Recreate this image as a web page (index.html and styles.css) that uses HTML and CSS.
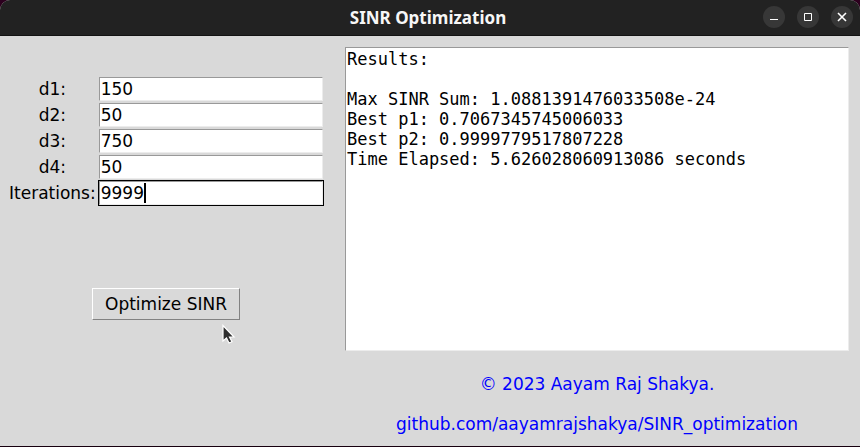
FILE: index.html
```html
<!DOCTYPE html>
<html lang="en">
<head>
<meta charset="utf-8">
<title>SINR Optimization</title>
<link rel="stylesheet" href="styles.css">
</head>
<body>
<div class="window">
  <header class="titlebar">
    <h1 class="title">SINR Optimization</h1>
    <div class="controls">
      <button type="button" class="control" aria-label="Minimize"><svg viewBox="0 0 22 22"><path d="M7 13.500h8"/></svg></button>
      <button type="button" class="control" aria-label="Maximize"><svg viewBox="0 0 22 22"><path d="M7.500 7.500h7v7h-7z"/></svg></button>
      <button type="button" class="control" aria-label="Close"><svg viewBox="0 0 22 22"><path class="cross" d="M7 7l8 8M15 7l-8 8"/></svg></button>
    </div>
  </header>
  <main class="content">
    <form class="panel">
      <div class="fields">
        <label for="d1">d1:</label>
        <div class="entry"><input id="d1" type="text" value="150"></div>
        <label for="d2">d2:</label>
        <div class="entry"><input id="d2" type="text" value="50"></div>
        <label for="d3">d3:</label>
        <div class="entry"><input id="d3" type="text" value="750"></div>
        <label for="d4">d4:</label>
        <div class="entry"><input id="d4" type="text" value="50"></div>
        <label for="iterations">Iterations:</label>
        <div class="entry active"><input id="iterations" type="text" value="9999"><span class="caret"></span></div>
      </div>
      <button type="button" class="run">Optimize SINR</button>
      <svg class="pointer" viewBox="0 0 14 22"><path d="M1 1.500v15.500l3.500-3 2.500 5 3-1.300-2.500-4.700h4.500z" fill="#2e2e2e" stroke="#fff" stroke-width="1.200"/></svg>
    </form>
    <section class="output">
      <textarea class="results" aria-label="Results" readonly>Results:

Max SINR Sum: 1.0881391476033508e-24
Best p1: 0.7067345745006033
Best p2: 0.9999779517807228
Time Elapsed: 5.626028060913086 seconds</textarea>
      <footer class="credits">
        <p>© 2023 Aayam Raj Shakya.</p>
        <p><a href="https://github.com/aayamrajshakya/SINR_optimization">github.com/aayamrajshakya/SINR_optimization</a></p>
      </footer>
    </section>
  </main>
</div>
</body>
</html>
```
FILE: styles.css
```css
* {
  box-sizing: border-box;
}

body {
  margin: 0;
  background: #2c001e;
  color: #000;
  font: 17px/20px "DejaVu Sans", sans-serif;
}

input,
button,
textarea {
  font: inherit;
  color: inherit;
  border-radius: 0;
}

.window {
  display: flex;
  flex-direction: column;
  min-height: 100vh;
  background: #d9d9d9;
  border-bottom: 1px solid #17000f;
  border-radius: 10px 10px 0 0;
  overflow: hidden;
}

.titlebar {
  display: grid;
  grid-template-columns: 1fr auto 1fr;
  align-items: center;
  height: 36px;
  padding: 0 7px 1px 3px;
  background: #222;
  border-bottom: 1px solid #131313;
}

.title {
  grid-column: 2;
  margin: 0;
  color: #f7f7f7;
  font: bold 17px/26px "Noto Sans", sans-serif;
  padding-top: 2px;
}

.controls {
  display: flex;
  justify-content: flex-end;
  gap: 12px;
}

.control {
  width: 22px;
  height: 22px;
  padding: 0;
  border: 0;
  border-radius: 50%;
  background: #373737;
}

.control svg {
  display: block;
  width: 22px;
  height: 22px;
  fill: none;
  stroke: #fff;
}

.cross {
  stroke-width: 1.600;
}

.content {
  flex: 1;
  display: grid;
  grid-template-columns: 2fr 3fr;
  padding: 11px 11px 2px 9px;
}

.panel {
  position: relative;
  padding-top: 29px;
  padding-right: 22px;
}

.fields {
  display: grid;
  grid-template-columns: auto 1fr;
  grid-auto-rows: 26px;
  column-gap: 2px;
  align-items: center;
  margin-right: -1px;
  text-align: center;
}

.entry {
  position: relative;
  height: 26px;
  padding: 1px;
}

.entry input {
  display: block;
  width: 100%;
  height: 24px;
  padding: 0 1px;
  border: 1px solid;
  border-color: #999 #ececec #ececec #999;
  background: #fff;
  outline: 0;
}

.entry.active {
  padding: 0;
  border: 1px solid #000;
}

.caret {
  position: absolute;
  top: 2px;
  left: 45px;
  width: 2px;
  height: 20px;
  background: #000;
}

.run {
  display: block;
  height: 32px;
  margin: 82px auto 0;
  padding: 0 12px;
  border: 1px solid;
  border-color: #fff #828282 #828282 #fff;
  background: #d9d9d9;
}

.pointer {
  position: absolute;
  top: 277px;
  left: 213px;
  width: 14px;
  height: 22px;
}

.output {
  display: flex;
  flex-direction: column;
}

.results {
  flex: 1;
  width: 100%;
  padding: 1px;
  border: 1px solid;
  border-color: #999 #ececec #ececec #999;
  background: #fff;
  font-family: "DejaVu Sans Mono", monospace;
  resize: none;
  outline: 0;
}

.credits {
  padding-top: 13px;
  color: #00f;
  line-height: 40px;
  text-align: center;
}

.credits p {
  margin: 0;
}

.credits a {
  color: inherit;
  text-decoration: none;
}
```
